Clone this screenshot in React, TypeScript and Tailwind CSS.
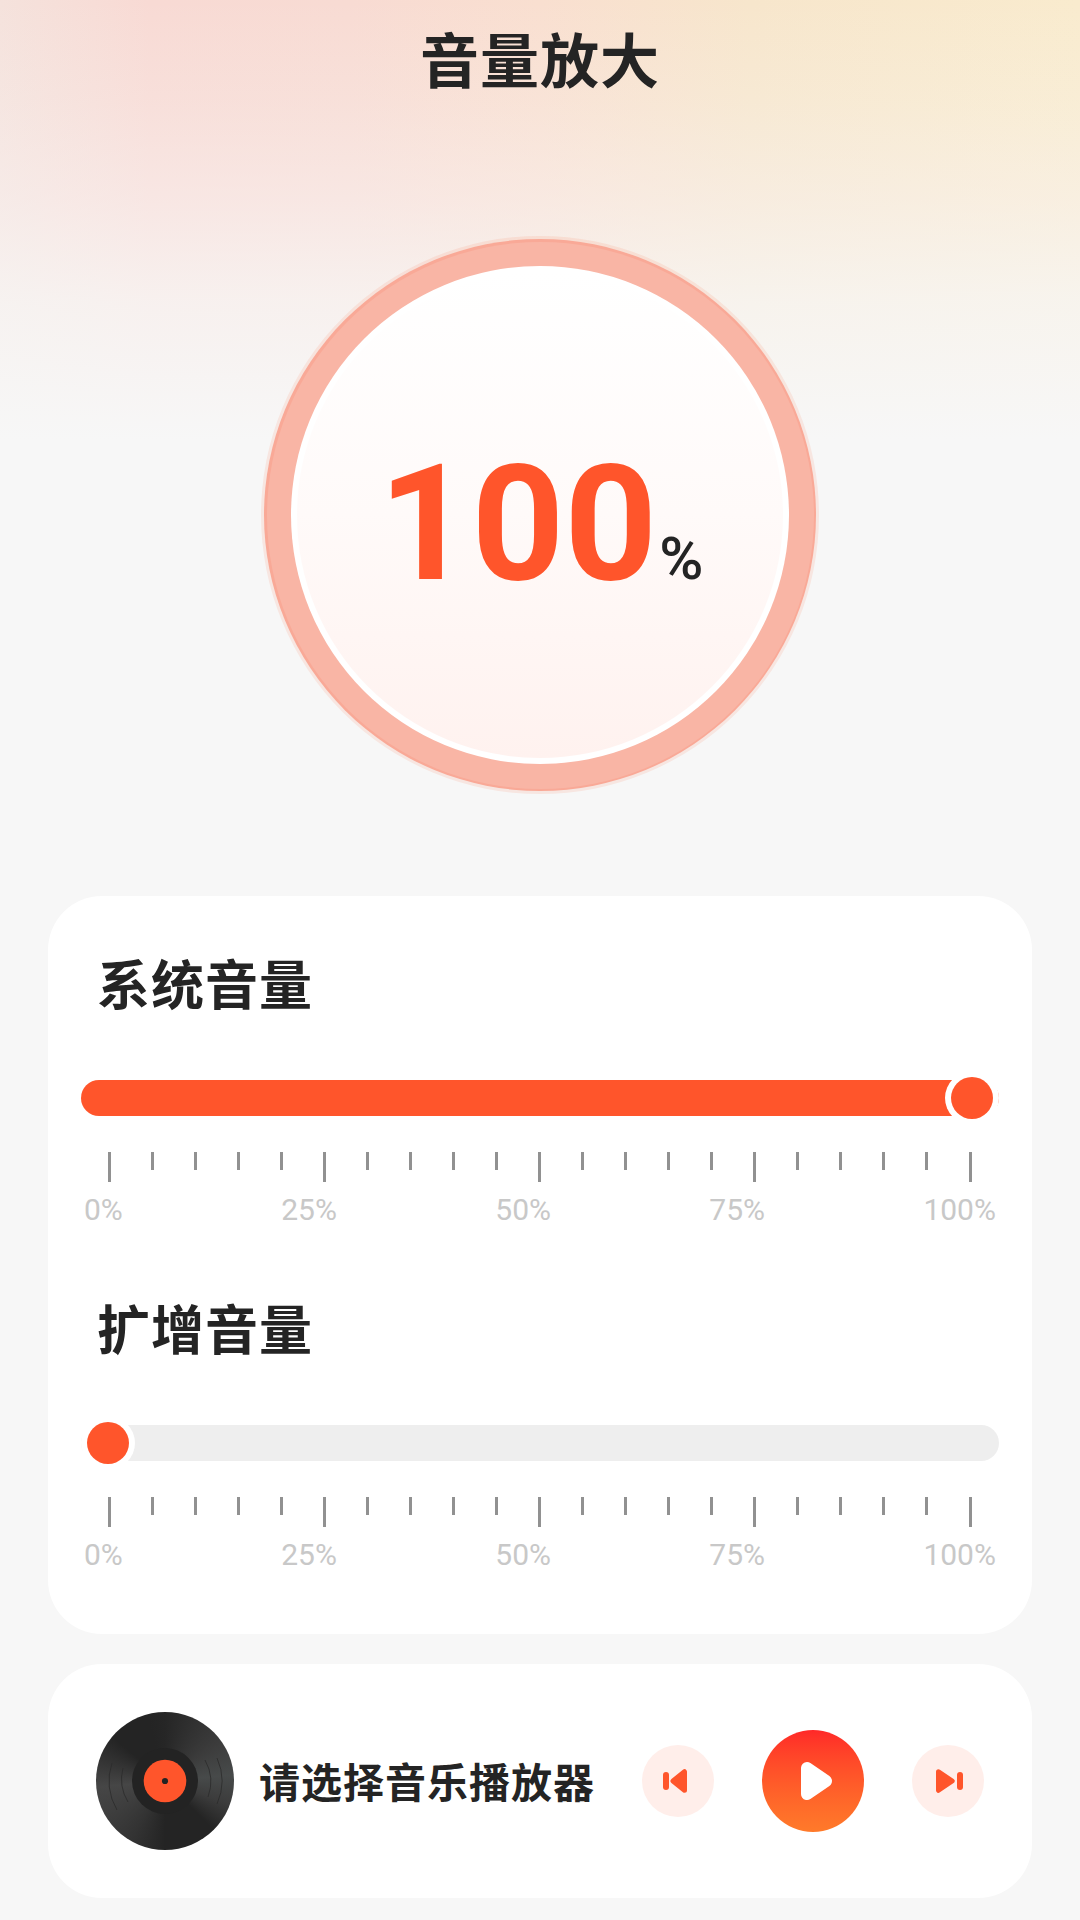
const labels = ["0%", "25%", "50%", "75%", "100%"];

function Scale() {
  return (
    <div className="mt-9">
      <div className="ml-[60px] flex h-[30px] items-start">
        {Array.from({ length: 21 }, (_, i) => (
          <div
            key={i}
            className={`${i === 19 ? "mr-[41px]" : i === 20 ? "" : "mr-10"} w-[3px] shrink-0 bg-[#919191] ${
              i % 5 === 0 ? "h-[30px]" : "h-[18px]"
            }`}
          />
        ))}
      </div>
      <div className="mt-[10px] ml-9 flex h-9 w-[912px] items-center justify-between text-[30px] leading-9 text-[#c8c8c8]">
        {labels.map((l) => (
          <span key={l}>{l}</span>
        ))}
      </div>
    </div>
  );
}

function VolumeSlider({ title, full }: { title: string; full?: boolean }) {
  return (
    <section className="h-[345px]">
      <h2 className="ml-[49px] h-[80px] text-[53px] leading-[80px] font-bold tracking-[1px]">{title}</h2>
      <div className={`relative mt-[53px] ml-[33px] h-9 w-[918px] rounded-full ${full ? "bg-[#ff552b]" : "bg-[#eeeeee]"}`}>
        <div
          className={`absolute -top-[9px] flex size-[54px] items-center justify-center rounded-full bg-white ${
            full ? "right-0" : "left-0"
          }`}
        >
          <div className="size-[42px] rounded-full bg-[#ff552b]" />
        </div>
      </div>
      <Scale />
    </section>
  );
}

function Vinyl() {
  return (
    <div className="size-[138px] shrink-0 rounded-full bg-[conic-gradient(#262626_0deg,#303030_25deg,#3c3c3c_55deg,#474a4a_85deg,#3c3c3c_110deg,#242424_135deg,#242424_180deg,#333333_210deg,#3e3e3e_240deg,#464646_265deg,#363636_285deg,#242424_310deg,#242424_345deg,#262626_360deg)]">
      <svg className="size-[138px]" viewBox="0 0 138 138">
        <g fill="none" stroke="#2b2b2b" strokeWidth="0.8">
          <path d="M16 51a56 56 0 0 0 5 47M27 56a44 44 0 0 0 5 34M109 48a44 44 0 0 1 3 37M121 46a56 56 0 0 1 0 46" />
        </g>
        <circle cx="69" cy="69" r="33" fill="#232323" />
        <circle cx="69" cy="69" r="21.3" fill="#ff552b" />
        <circle cx="69" cy="69" r="3.1" fill="#232323" />
      </svg>
    </div>
  );
}

function PreviousIcon() {
  return (
    <svg className="size-[72px]" viewBox="0 0 72 72" fill="#ff552b">
      <rect x="21" y="27" width="6" height="18" rx="3" />
      <path d="M31 36 L42.5 26.7 V45.3 Z" stroke="#ff552b" strokeWidth="5" strokeLinejoin="round" />
    </svg>
  );
}

function NextIcon() {
  return (
    <svg className="size-[72px]" viewBox="0 0 72 72" fill="#ff552b">
      <rect x="45" y="27" width="6" height="18" rx="3" />
      <path d="M26.5 26.7 L40.2 36 L26.5 45.3 Z" stroke="#ff552b" strokeWidth="5" strokeLinejoin="round" />
    </svg>
  );
}

export default function App() {
  return (
    <main
      className="flex h-[1920px] w-[1080px] flex-col items-center overflow-hidden bg-[#f7f7f7] text-[#242424]"
      style={{ fontFamily: 'Roboto, "Noto Sans CJK SC", sans-serif' }}
    >
      <div className="flex h-[896px] w-full flex-col items-center bg-[linear-gradient(180deg,rgba(247,247,247,0)_0px,rgba(247,247,247,0.18)_100px,rgba(248,243,243,0.5)_200px,rgba(247,246,245,0.8)_300px,#f7f7f7_440px),linear-gradient(90deg,#f5e2dc_0px,#f8dad4_150px,#f8dbd3_350px,#f9dfd0_540px,#f7e6cc_750px,#f9ebce_1080px)]">
        <h1 className="mt-[18px] h-[90px] text-[59px] leading-[90px] font-bold tracking-[1px]">音量放大</h1>
        <div className="mt-[128px] flex size-[558px] items-center justify-center rounded-full bg-[#ff552b]/10">
          <div className="flex size-[552px] items-center justify-center rounded-full bg-[#f9a997]">
            <div className="flex size-[547px] items-center justify-center rounded-full bg-[#f9b5a5]">
              <div className="flex size-[498px] items-center justify-center rounded-full bg-white">
                <div className="flex size-[486px] items-baseline justify-center rounded-full bg-linear-to-b from-white via-[#fffaf9] to-[#fff2ef]">
                  <span className="mt-[157px] ml-[2px] text-[162px] leading-[190px] font-bold text-[#ff552b]">100</span>
                  <span className="ml-[2px] text-[60px] font-medium">%</span>
                </div>
              </div>
            </div>
          </div>
        </div>
      </div>

      <div className="h-[738px] w-[984px] shrink-0 rounded-[54px] bg-white pt-[51px]">
        <VolumeSlider title="系统音量" full />
        <VolumeSlider title="扩增音量" />
      </div>

      <div className="mt-[30px] flex h-[234px] w-[984px] shrink-0 items-center rounded-[54px] bg-white pl-12">
        <Vinyl />
        <div className="mt-[6px] ml-[25px] w-[383px] text-[41px] leading-[60px] font-bold tracking-[1px] whitespace-nowrap">
          请选择音乐播放器
        </div>
        <button className="size-[72px] rounded-full bg-[#ffeeea]">
          <PreviousIcon />
        </button>
        <button className="ml-12 size-[102px] rounded-full bg-linear-to-b from-[#ff2828] to-[#ff7a2a]">
          <svg className="size-[102px]" viewBox="0 0 102 102">
            <path d="M45 38 L64 51 L45 64 Z" fill="#fff" stroke="#fff" strokeWidth="12" strokeLinejoin="round" />
          </svg>
        </button>
        <button className="ml-12 size-[72px] rounded-full bg-[#ffeeea]">
          <NextIcon />
        </button>
      </div>
    </main>
  );
}
